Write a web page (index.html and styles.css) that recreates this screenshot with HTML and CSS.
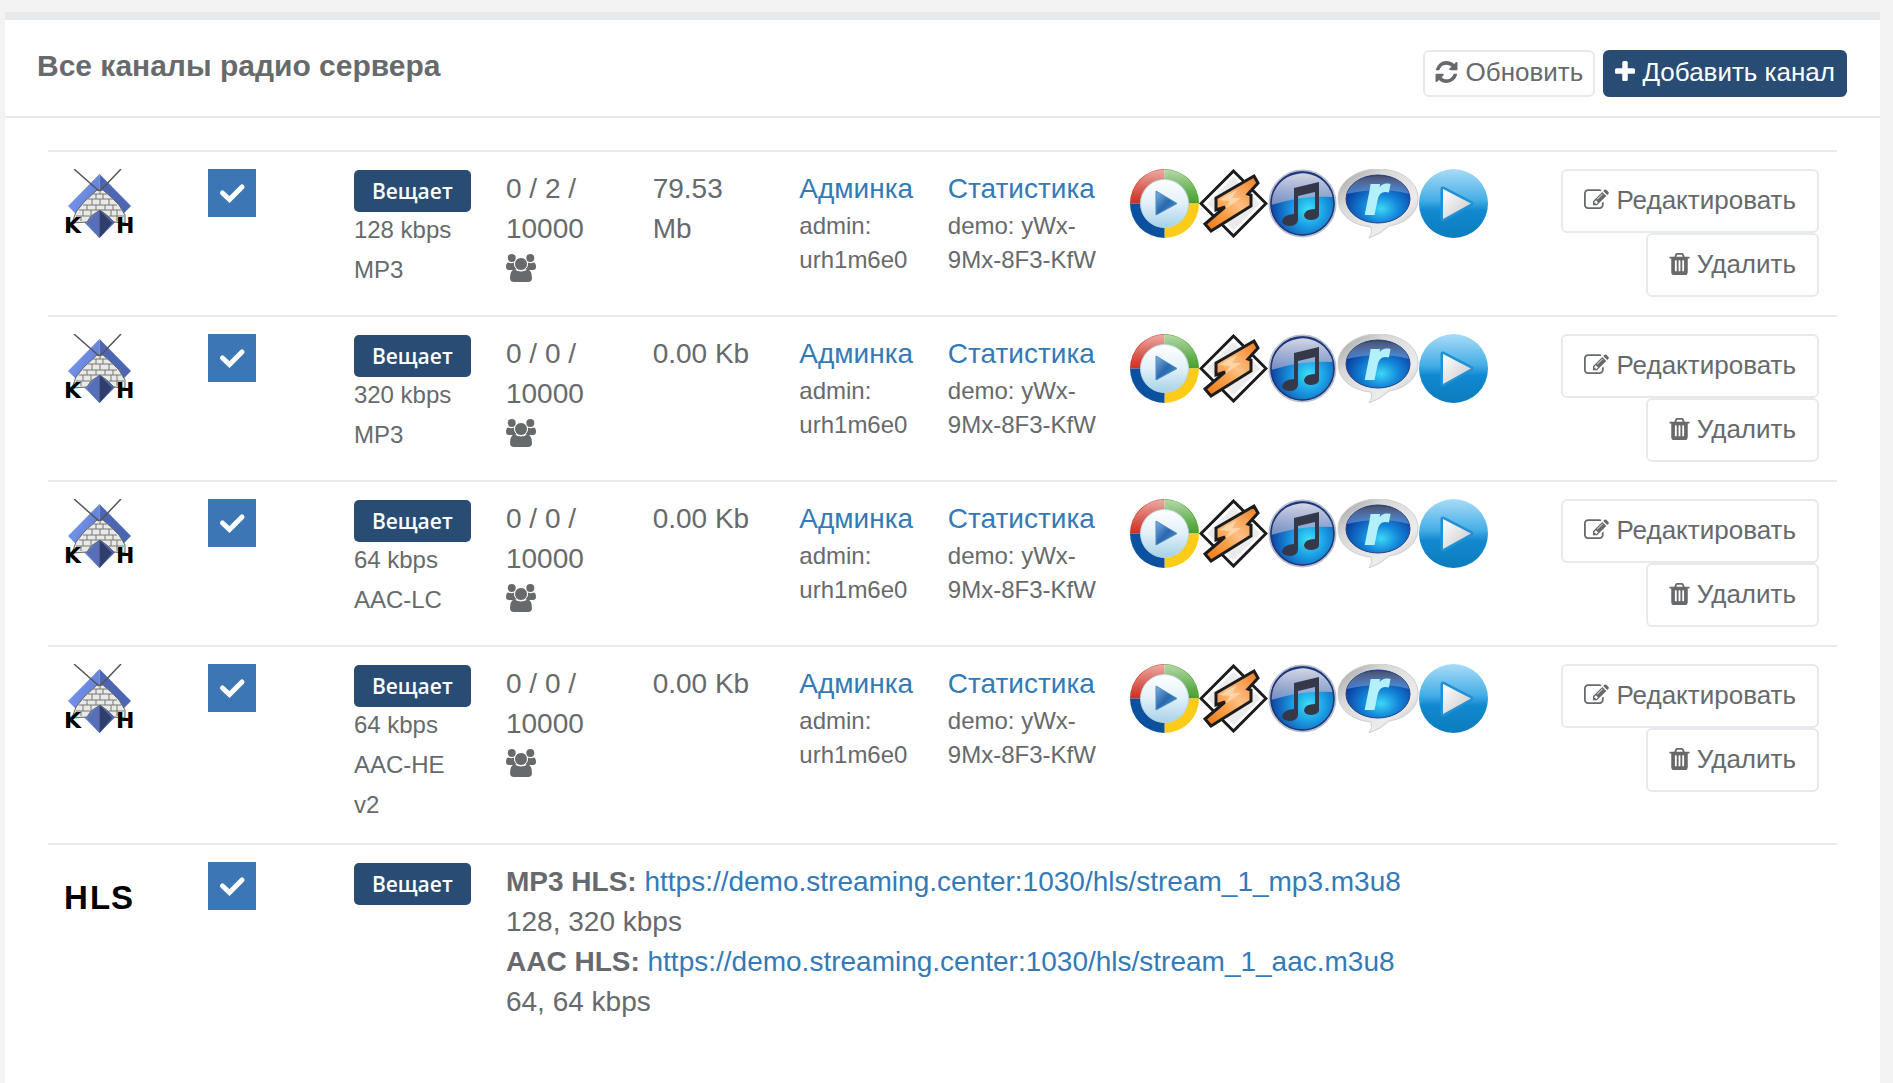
FILE: index.html
```html
<!DOCTYPE html>
<html lang="ru">
<head>
    <meta charset="UTF-8">
    <meta name="viewport" content="width=device-width, initial-scale=1.0">
    <title>Все каналы радио сервера</title>
    <link rel="stylesheet" href="styles.css">
</head>
<body>
    <!-- Иконки -->
    <svg class="sprite" width="0" height="0" aria-hidden="true">
        <defs>
            <linearGradient id="ring-shine" x1="0" y1="0" x2="0" y2="1">
                <stop offset="0" stop-color="#fff" stop-opacity=".6"/>
                <stop offset=".35" stop-color="#fff" stop-opacity=".15"/>
                <stop offset=".5" stop-color="#fff" stop-opacity="0"/>
            </linearGradient>
            <linearGradient id="wmp-face" x1="0" y1="0" x2="0" y2="1">
                <stop offset="0" stop-color="#fff"/>
                <stop offset=".5" stop-color="#e2f0f8"/>
                <stop offset="1" stop-color="#a5d2e8"/>
            </linearGradient>
            <linearGradient id="wmp-play" x1="0" y1="0" x2="1" y2="1">
                <stop offset="0" stop-color="#7fb2e0"/>
                <stop offset=".5" stop-color="#2b68ad"/>
                <stop offset="1" stop-color="#4f9bd0"/>
            </linearGradient>
            <linearGradient id="bolt" x1="1" y1="0" x2="0" y2="1">
                <stop offset="0" stop-color="#ee7a1c"/>
                <stop offset=".45" stop-color="#ffc084"/>
                <stop offset=".65" stop-color="#f9a04a"/>
                <stop offset="1" stop-color="#ee7412"/>
            </linearGradient>
            <radialGradient id="itunes-face" cx=".6" cy=".6" r=".6">
                <stop offset="0" stop-color="#3fe0fa"/>
                <stop offset=".4" stop-color="#1ba0e6"/>
                <stop offset="1" stop-color="#0b3da0"/>
            </radialGradient>
            <linearGradient id="itunes-shine" x1="0" y1="0" x2="0" y2="1">
                <stop offset="0" stop-color="#d4d6e4"/>
                <stop offset="1" stop-color="#8f9cc8" stop-opacity=".8"/>
            </linearGradient>
            <linearGradient id="real-rim" x1="0" y1="0" x2="1" y2="1">
                <stop offset="0" stop-color="#9c9c9c"/>
                <stop offset=".3" stop-color="#d8d8d8"/>
                <stop offset=".7" stop-color="#ececec"/>
                <stop offset="1" stop-color="#b8b8b8"/>
            </linearGradient>
            <radialGradient id="real-face" cx=".55" cy=".7" r=".6">
                <stop offset="0" stop-color="#3cd8f4"/>
                <stop offset=".45" stop-color="#1488dc"/>
                <stop offset="1" stop-color="#0a3c9c"/>
            </radialGradient>
            <linearGradient id="real-shine" x1="0" y1="0" x2="0" y2="1">
                <stop offset="0" stop-color="#4a5068"/>
                <stop offset="1" stop-color="#7fb0ea" stop-opacity=".5"/>
            </linearGradient>
            <linearGradient id="play-face" x1="0" y1="0" x2="0" y2="1">
                <stop offset="0" stop-color="#a9dcf8"/>
                <stop offset=".45" stop-color="#45aee6"/>
                <stop offset=".6" stop-color="#1189d0"/>
                <stop offset="1" stop-color="#0c7cbc"/>
            </linearGradient>
            <linearGradient id="play-arrow" x1="0" y1="0" x2="1" y2="1">
                <stop offset="0" stop-color="#fff"/>
                <stop offset="1" stop-color="#c8c8c8"/>
            </linearGradient>
            <linearGradient id="kh-left" x1="0" y1="0" x2="1" y2="1">
                <stop offset="0" stop-color="#7d9cf6"/>
                <stop offset="1" stop-color="#5573c4"/>
            </linearGradient>
        </defs>

        <symbol id="refresh" viewBox="128 128 1536 1536">
            <path d="M1639 1056q0 5-1 7-64 268-268 434.5t-478 166.5q-146 0-282.5-55t-243.5-157l-129 129q-19 19-45 19t-45-19-19-45v-448q0-26 19-45t45-19h448q26 0 45 19t19 45-19 45l-137 137q71 66 161 102t187 36q134 0 250-65t186-179q11-17 53-117 8-23 30-23h192q13 0 22.5 9.5t9.5 22.5zm25-800v448q0 26-19 45t-45 19h-448q-26 0-45-19t-19-45 19-45l138-138q-148-137-349-137-134 0-250 65t-186 179q-11 17-53 117-8 23-30 23h-199q-13 0-22.5-9.5t-9.5-22.5v-7q65-268 270-434.5t480-166.5q146 0 284 55.5t245 156.5l130-129q19-19 45-19t45 19 19 45z"/>
        </symbol>
        <symbol id="plus" viewBox="192 128 1408 1536">
            <path d="M1600 736v192q0 40-28 68t-68 28h-416v416q0 40-28 68t-68 28h-192q-40 0-68-28t-28-68v-416h-416q-40 0-68-28t-28-68v-192q0-40 28-68t68-28h416v-416q0-40 28-68t68-28h192q40 0 68 28t28 68v416h416q40 0 68 28t28 68z"/>
        </symbol>
        <symbol id="trash" viewBox="192 128 1408 1536">
            <path d="M704 1376v-704q0-14-9-23t-23-9h-64q-14 0-23 9t-9 23v704q0 14 9 23t23 9h64q14 0 23-9t9-23zm256 0v-704q0-14-9-23t-23-9h-64q-14 0-23 9t-9 23v704q0 14 9 23t23 9h64q14 0 23-9t9-23zm256 0v-704q0-14-9-23t-23-9h-64q-14 0-23 9t-9 23v704q0 14 9 23t23 9h64q14 0 23-9t9-23zm-544-992h448l-48-117q-7-9-17-11h-317q-10 2-17 11zm928 32v64q0 14-9 23t-23 9h-96v948q0 83-47 143.5t-113 60.5h-832q-66 0-113-58.5t-47-141.5v-952h-96q-14 0-23-9t-9-23v-64q0-14 9-23t23-9h309l70-167q15-37 54-63t79-26h320q40 0 79 26t54 63l70 167h309q14 0 23 9t9 23z"/>
        </symbol>
        <symbol id="edit" viewBox="0 128 1792 1536">
            <path d="M888 1184l116-116-152-152-116 116v56h96v96h56zm440-720q-16-16-33 1l-350 350q-17 17-1 33t33-1l350-350q17-17 1-33zm80 594v190q0 119-84.5 203.5t-203.5 84.5h-832q-119 0-203.5-84.5t-84.5-203.5v-832q0-119 84.5-203.5t203.5-84.5h832q63 0 117 25 15 7 18 23 3 17-9 29l-49 49q-14 14-32 8-23-6-45-6h-832q-66 0-113 47t-47 113v832q0 66 47 113t113 47h832q66 0 113-47t47-113v-126q0-13 9-22l64-64q15-15 35-7t20 29zm-96-738l288 288-672 672h-288v-288zm444 132l-92 92-288-288 92-92q28-28 68-28t68 28l152 152q28 28 28 68t-28 68z"/>
        </symbol>
        <symbol id="users" viewBox="0 0 30 28">
            <circle cx="5.7" cy="4" r="4"/>
            <circle cx="24.3" cy="4" r="4"/>
            <path d="M2 8.500q4 1.500 6 0 0 4 3 6.500-2 1-3 1H3q-3 0-3-3 0-4 2-4.500zM28 8.500q-4 1.500-6 0 0 4-3 6.500 2 1 3 1h5q3 0 3-3 0-4-2-4.500z"/>
            <circle cx="15" cy="10" r="6.500" stroke="#fff"/>
            <path d="M8.500 15.500q6.500 4 13 0Q26 16 26 24q0 4-4 4H8q-4 0-4-4 0-8 4.500-8.500z"/>
        </symbol>
        <symbol id="check" viewBox="0 0 48 48">
            <path d="M14.500 24l7 6.500L34 18" fill="none" stroke="#fff" stroke-width="5" stroke-linecap="round"/>
        </symbol>

        <symbol id="logo-kh" viewBox="0 0 69 69">
            <path d="M34.500 5L3 37l31.500 32z" fill="url(#kh-left)"/>
            <path d="M34.500 5L66 37 34.500 69z" fill="#4c66b4"/>
            <path d="M32 21h6l8 7 8 8 6 10v8l-11-1-6-6-8-6-9 6-4 6-15 1 4-11 8-10z" fill="#e9e9e6" stroke="#666" stroke-width="1"/>
            <path d="M28 25h14M23 30h26M18 36h34M14 41h42M11 47h14M44 47h15M35 21v4M31 25v5M38 25v5M27 30v6M35 30v6M44 30v6M22 36v5M31 36v5M40 36v5M48 36v5M18 41v6M26 41v6M46 41v6M52 41v6M16 47v5M52 47v5" stroke="#777" stroke-width="1" fill="none"/>
            <path d="M34.500 41L22 54l12.500 15z" fill="#566fb6"/>
            <path d="M34.500 41L47 54 34.500 69z" fill="#303e6c"/>
            <path d="M9 0l25 22M56 0L35 22" stroke="#555" stroke-width="1.500" fill="none"/>
        </symbol>

        <symbol id="wmp" viewBox="0 0 69 69">
            <path d="M34.500 34.500V0A34.500 34.500 0 0 0 0 34.500z" fill="#cf2f20"/>
            <path d="M34.500 34.500H69A34.500 34.500 0 0 0 34.500 0z" fill="#46a02c"/>
            <path d="M34.500 34.500V69A34.500 34.500 0 0 0 69 34.500z" fill="#fccc18"/>
            <path d="M34.500 34.500H0A34.500 34.500 0 0 0 34.500 69z" fill="#0c50a0"/>
            <circle cx="34.500" cy="34.500" r="34" fill="url(#ring-shine)"/>
            <circle cx="34.500" cy="34.500" r="24" fill="url(#wmp-face)" stroke="#b8d8e8" stroke-width="1"/>
            <path d="M26 22l21 12.500L26 46z" fill="url(#wmp-play)" stroke="#4f8cc4" stroke-width="1" stroke-linejoin="round"/>
        </symbol>
        <symbol id="winamp" viewBox="0 0 69 69">
            <path d="M34.500 2L67 34.500 34.500 67 2 34.500z" fill="#fff" stroke="#1c1c1c" stroke-width="3"/>
            <path d="M34.500 8L61 34.500 34.500 61 8 34.500z" fill="#ebebeb"/>
            <path d="M55 7l4 7-10 11 3 1v11L12 62l-6-7 20-17-9 3V29z" fill="url(#bolt)" stroke="#1c1c1c" stroke-width="3"/>
            <path d="M20 31l18-10-5 8h9L26 40l5-8z" fill="#ffe0bb" opacity=".7"/>
        </symbol>
        <symbol id="itunes" viewBox="0 0 69 69">
            <circle cx="34.500" cy="34.500" r="33" fill="url(#itunes-face)" stroke="#b8bfd0" stroke-width="2"/>
            <path d="M3 36A31.500 31.500 0 0 1 65 28Q34 26 3 36z" fill="url(#itunes-shine)"/>
            <circle cx="34.500" cy="34.500" r="31.500" fill="none" stroke="#27356e" stroke-width="1.500"/>
            <path d="M26 19l25-6v33q0 4-7 5-8 0-8-5 1-6 11-6V23l-17 4v24q-1 6-9 6-7-1-7-5 1-6 12-7z" fill="#343848"/>
        </symbol>
        <symbol id="real" viewBox="0 0 82 69">
            <path d="M41 0c22 0 40 12 40 29S66 55 52 57q-8 8-20 12 4-5 2-11C14 56 1 45 1 29S19 0 41 0z" fill="url(#real-rim)" stroke="#cfcfcf" stroke-width="1"/>
            <ellipse cx="41" cy="30" rx="32" ry="24" fill="url(#real-face)" stroke="#27417e" stroke-width="1"/>
            <path d="M10 25Q16 7 41 7t31 18q-28-8-62 0z" fill="url(#real-shine)"/>
        </symbol>
        <symbol id="play" viewBox="0 0 69 69">
            <circle cx="34.500" cy="34.500" r="34.500" fill="url(#play-face)"/>
            <path d="M24 20l28 14.500L24 50z" fill="url(#play-arrow)" stroke="#2390d4" stroke-width="5" stroke-linejoin="round" paint-order="stroke"/>
        </symbol>
    </svg>

    <div class="ibox">
        <div class="ibox-title">
            <h5>Все каналы радио сервера</h5>
            <div class="ibox-tools">
                <button type="button" class="btn btn-sm btn-white"><svg class="icon icon-refresh"><use href="#refresh"/></svg> Обновить</button>
                <button type="button" class="btn btn-sm btn-primary"><svg class="icon icon-plus"><use href="#plus"/></svg> Добавить канал</button>
            </div>
        </div>

        <div class="ibox-content">
            <table class="channels">
                <colgroup>
                    <col class="col-logo">
                    <col class="col-on">
                    <col class="col-status">
                    <col class="col-listeners">
                    <col class="col-traffic">
                    <col class="col-admin">
                    <col class="col-stats">
                    <col class="col-players">
                    <col>
                </colgroup>
                <tbody>
                    <!-- 128 kbps MP3 -->
                    <tr>
                        <td><svg class="logo" viewBox="0 0 69 69"><use href="#logo-kh"/><text x="-1" y="64" class="kh-letter">K</text><text x="51" y="64" class="kh-letter">H</text></svg></td>
                        <td><label class="check"><input type="checkbox" aria-label="Канал 1" checked><svg><use href="#check"/></svg></label></td>
                        <td><span class="label">Вещает</span><div class="small">128 kbps<br>MP3</div></td>
                        <td>0 / 2 /<br>10000<br><svg class="icon icon-users"><use href="#users"/></svg></td>
                        <td>79.53 Mb</td>
                        <td><a href="#">Админка</a><div class="login">admin: urh1m6e0</div></td>
                        <td><a href="#">Статистика</a><div class="login">demo: yWx-9Mx-8F3-KfW</div></td>
                        <td>
                            <div class="players">
                                <a href="#" aria-label="Windows Media"><svg><use href="#wmp"/></svg></a>
                                <a href="#" aria-label="Winamp"><svg><use href="#winamp"/></svg></a>
                                <a href="#" aria-label="iTunes"><svg><use href="#itunes"/></svg></a>
                                <a href="#" aria-label="Real Player"><svg class="wide" viewBox="0 0 82 69"><use href="#real"/><text x="28" y="45" class="real-letter">r</text></svg></a>
                                <a href="#" aria-label="Play"><svg><use href="#play"/></svg></a>
                            </div>
                        </td>
                        <td>
                            <div class="actions">
                                <button type="button" class="btn btn-white"><svg class="icon icon-edit"><use href="#edit"/></svg> Редактировать</button>
                                <button type="button" class="btn btn-white"><svg class="icon icon-trash"><use href="#trash"/></svg> Удалить</button>
                            </div>
                        </td>
                    </tr>

                    <!-- 320 kbps MP3 -->
                    <tr>
                        <td><svg class="logo" viewBox="0 0 69 69"><use href="#logo-kh"/><text x="-1" y="64" class="kh-letter">K</text><text x="51" y="64" class="kh-letter">H</text></svg></td>
                        <td><label class="check"><input type="checkbox" aria-label="Канал 2" checked><svg><use href="#check"/></svg></label></td>
                        <td><span class="label">Вещает</span><div class="small">320 kbps<br>MP3</div></td>
                        <td>0 / 0 /<br>10000<br><svg class="icon icon-users"><use href="#users"/></svg></td>
                        <td>0.00 Kb</td>
                        <td><a href="#">Админка</a><div class="login">admin: urh1m6e0</div></td>
                        <td><a href="#">Статистика</a><div class="login">demo: yWx-9Mx-8F3-KfW</div></td>
                        <td>
                            <div class="players">
                                <a href="#" aria-label="Windows Media"><svg><use href="#wmp"/></svg></a>
                                <a href="#" aria-label="Winamp"><svg><use href="#winamp"/></svg></a>
                                <a href="#" aria-label="iTunes"><svg><use href="#itunes"/></svg></a>
                                <a href="#" aria-label="Real Player"><svg class="wide" viewBox="0 0 82 69"><use href="#real"/><text x="28" y="45" class="real-letter">r</text></svg></a>
                                <a href="#" aria-label="Play"><svg><use href="#play"/></svg></a>
                            </div>
                        </td>
                        <td>
                            <div class="actions">
                                <button type="button" class="btn btn-white"><svg class="icon icon-edit"><use href="#edit"/></svg> Редактировать</button>
                                <button type="button" class="btn btn-white"><svg class="icon icon-trash"><use href="#trash"/></svg> Удалить</button>
                            </div>
                        </td>
                    </tr>

                    <!-- 64 kbps AAC-LC -->
                    <tr>
                        <td><svg class="logo" viewBox="0 0 69 69"><use href="#logo-kh"/><text x="-1" y="64" class="kh-letter">K</text><text x="51" y="64" class="kh-letter">H</text></svg></td>
                        <td><label class="check"><input type="checkbox" aria-label="Канал 3" checked><svg><use href="#check"/></svg></label></td>
                        <td><span class="label">Вещает</span><div class="small">64 kbps<br>AAC-LC</div></td>
                        <td>0 / 0 /<br>10000<br><svg class="icon icon-users"><use href="#users"/></svg></td>
                        <td>0.00 Kb</td>
                        <td><a href="#">Админка</a><div class="login">admin: urh1m6e0</div></td>
                        <td><a href="#">Статистика</a><div class="login">demo: yWx-9Mx-8F3-KfW</div></td>
                        <td>
                            <div class="players">
                                <a href="#" aria-label="Windows Media"><svg><use href="#wmp"/></svg></a>
                                <a href="#" aria-label="Winamp"><svg><use href="#winamp"/></svg></a>
                                <a href="#" aria-label="iTunes"><svg><use href="#itunes"/></svg></a>
                                <a href="#" aria-label="Real Player"><svg class="wide" viewBox="0 0 82 69"><use href="#real"/><text x="28" y="45" class="real-letter">r</text></svg></a>
                                <a href="#" aria-label="Play"><svg><use href="#play"/></svg></a>
                            </div>
                        </td>
                        <td>
                            <div class="actions">
                                <button type="button" class="btn btn-white"><svg class="icon icon-edit"><use href="#edit"/></svg> Редактировать</button>
                                <button type="button" class="btn btn-white"><svg class="icon icon-trash"><use href="#trash"/></svg> Удалить</button>
                            </div>
                        </td>
                    </tr>

                    <!-- 64 kbps AAC-HE v2 -->
                    <tr>
                        <td><svg class="logo" viewBox="0 0 69 69"><use href="#logo-kh"/><text x="-1" y="64" class="kh-letter">K</text><text x="51" y="64" class="kh-letter">H</text></svg></td>
                        <td><label class="check"><input type="checkbox" aria-label="Канал 4" checked><svg><use href="#check"/></svg></label></td>
                        <td><span class="label">Вещает</span><div class="small">64 kbps<br>AAC-HE<br>v2</div></td>
                        <td>0 / 0 /<br>10000<br><svg class="icon icon-users"><use href="#users"/></svg></td>
                        <td>0.00 Kb</td>
                        <td><a href="#">Админка</a><div class="login">admin: urh1m6e0</div></td>
                        <td><a href="#">Статистика</a><div class="login">demo: yWx-9Mx-8F3-KfW</div></td>
                        <td>
                            <div class="players">
                                <a href="#" aria-label="Windows Media"><svg><use href="#wmp"/></svg></a>
                                <a href="#" aria-label="Winamp"><svg><use href="#winamp"/></svg></a>
                                <a href="#" aria-label="iTunes"><svg><use href="#itunes"/></svg></a>
                                <a href="#" aria-label="Real Player"><svg class="wide" viewBox="0 0 82 69"><use href="#real"/><text x="28" y="45" class="real-letter">r</text></svg></a>
                                <a href="#" aria-label="Play"><svg><use href="#play"/></svg></a>
                            </div>
                        </td>
                        <td>
                            <div class="actions">
                                <button type="button" class="btn btn-white"><svg class="icon icon-edit"><use href="#edit"/></svg> Редактировать</button>
                                <button type="button" class="btn btn-white"><svg class="icon icon-trash"><use href="#trash"/></svg> Удалить</button>
                            </div>
                        </td>
                    </tr>

                    <!-- HLS -->
                    <tr>
                        <td>
                            <svg class="logo" viewBox="0 0 69 69">
                                <text x="-1 25 46" y="47" class="hls-letter">HLS</text>
                            </svg>
                        </td>
                        <td><label class="check"><input type="checkbox" aria-label="HLS" checked><svg><use href="#check"/></svg></label></td>
                        <td><span class="label">Вещает</span></td>
                        <td colspan="6">
                            <b>MP3 HLS:</b> <a href="#">https://demo.streaming.center:1030/hls/stream_1_mp3.m3u8</a><br>
                            128, 320 kbps<br>
                            <b>AAC HLS:</b> <a href="#">https://demo.streaming.center:1030/hls/stream_1_aac.m3u8</a><br>
                            64, 64 kbps
                        </td>
                    </tr>
                </tbody>
            </table>
        </div>
    </div>
</body>
</html>
```

FILE: styles.css
```css
* {
    box-sizing: border-box;
}
body {
    margin: 0;
    padding: 12px 13px 0 5px;
    background: #f3f3f3;
    color: #676a6c;
    font-family: "Liberation Sans", Arial, sans-serif;
    font-size: 28px;
    line-height: 40px;
}
a {
    color: #337ab7;
    text-decoration: none;
}
.sprite {
    position: absolute;
}

/* Панель */
.ibox {
    min-height: calc(100vh - 12px);
    background: #fff;
    border-top: 8px solid #e7eaec;
}
.ibox-title {
    display: flex;
    justify-content: space-between;
    align-items: flex-start;
    padding: 30px 33px 19px 32px;
    border-bottom: 2px solid #e7eaec;
}
.ibox-title h5 {
    margin: 0;
    font-size: 30px;
    line-height: 32px;
}
.ibox-tools {
    display: flex;
    gap: 8px;
}
.ibox-content {
    padding: 32px 43px;
}

/* Кнопки */
.btn {
    padding: 11px 21px 13px;
    border: 2px solid #e7eaec;
    border-radius: 6px;
    font-family: inherit;
    font-size: 26px;
    line-height: 36px;
    white-space: nowrap;
    cursor: pointer;
}
.btn-sm {
    padding: 2px 10px 5px;
}
.btn-white {
    background: #fff;
    color: #676a6c;
}
.btn-primary {
    background: #294c75;
    border-color: #294c75;
    color: #fff;
}
.icon {
    height: 22px;
    fill: currentColor;
    vertical-align: -2px;
}
.icon-refresh {
    width: 23px;
}
.icon-plus {
    width: 20px;
}
.icon-trash {
    width: 21px;
}
.icon-edit {
    width: 25px;
}
.icon-users {
    width: 30px;
    height: 28px;
    vertical-align: -4px;
}

/* Таблица каналов */
.channels {
    width: 100%;
    table-layout: fixed;
    border-collapse: separate;
    border-spacing: 0;
}
.channels td {
    padding: 17px 16px 18px 17px;
    border-top: 2px solid #e7eaec;
    vertical-align: top;
}
.channels td:last-child {
    padding-right: 18px;
}
.col-logo {
    width: 8%;
}
.col-on {
    width: 8.15%;
}
.col-status {
    width: 8.5%;
}
.col-listeners,
.col-traffic {
    width: 8.2%;
}
.col-admin {
    width: 8.3%;
}
.col-stats {
    width: 10.2%;
}
.col-players {
    width: 22%;
}
.logo {
    display: block;
    width: 69px;
    height: 69px;
    overflow: visible;
}
.kh-letter {
    font: bold 22px "DejaVu Sans", sans-serif;
}
.hls-letter {
    font: bold 33px "Liberation Sans", Arial, sans-serif;
}
.real-letter {
    font: italic bold 56px "Liberation Sans", Arial, sans-serif;
    fill: #b4f0fb;
    stroke: #b4f0fb;
    stroke-width: 2px;
}
.check {
    display: grid;
    width: 48px;
    height: 48px;
}
.check input,
.check svg {
    grid-area: 1 / 1;
    width: 48px;
    height: 48px;
    margin: 0;
}
.check input {
    appearance: none;
    background: #3d76b5;
}
.check svg {
    pointer-events: none;
}
.check input:not(:checked) + svg {
    visibility: hidden;
}
.label {
    display: inline-block;
    margin: 1px 0 -2px;
    padding: 0 18px;
    border-radius: 5px;
    background: #294c75;
    color: #fff;
    font-family: "Open Sans", sans-serif;
    font-size: 21px;
    font-weight: 600;
    line-height: 42px;
    vertical-align: top;
}
.small {
    font-size: 24px;
}
.login {
    font-size: 24px;
    line-height: 34px;
}
.players {
    display: flex;
}
.players svg {
    display: block;
    width: 69px;
    height: 69px;
    overflow: visible;
}
.players .wide {
    width: 82px;
}
.actions {
    display: flex;
    flex-direction: column;
    align-items: flex-end;
}
```
